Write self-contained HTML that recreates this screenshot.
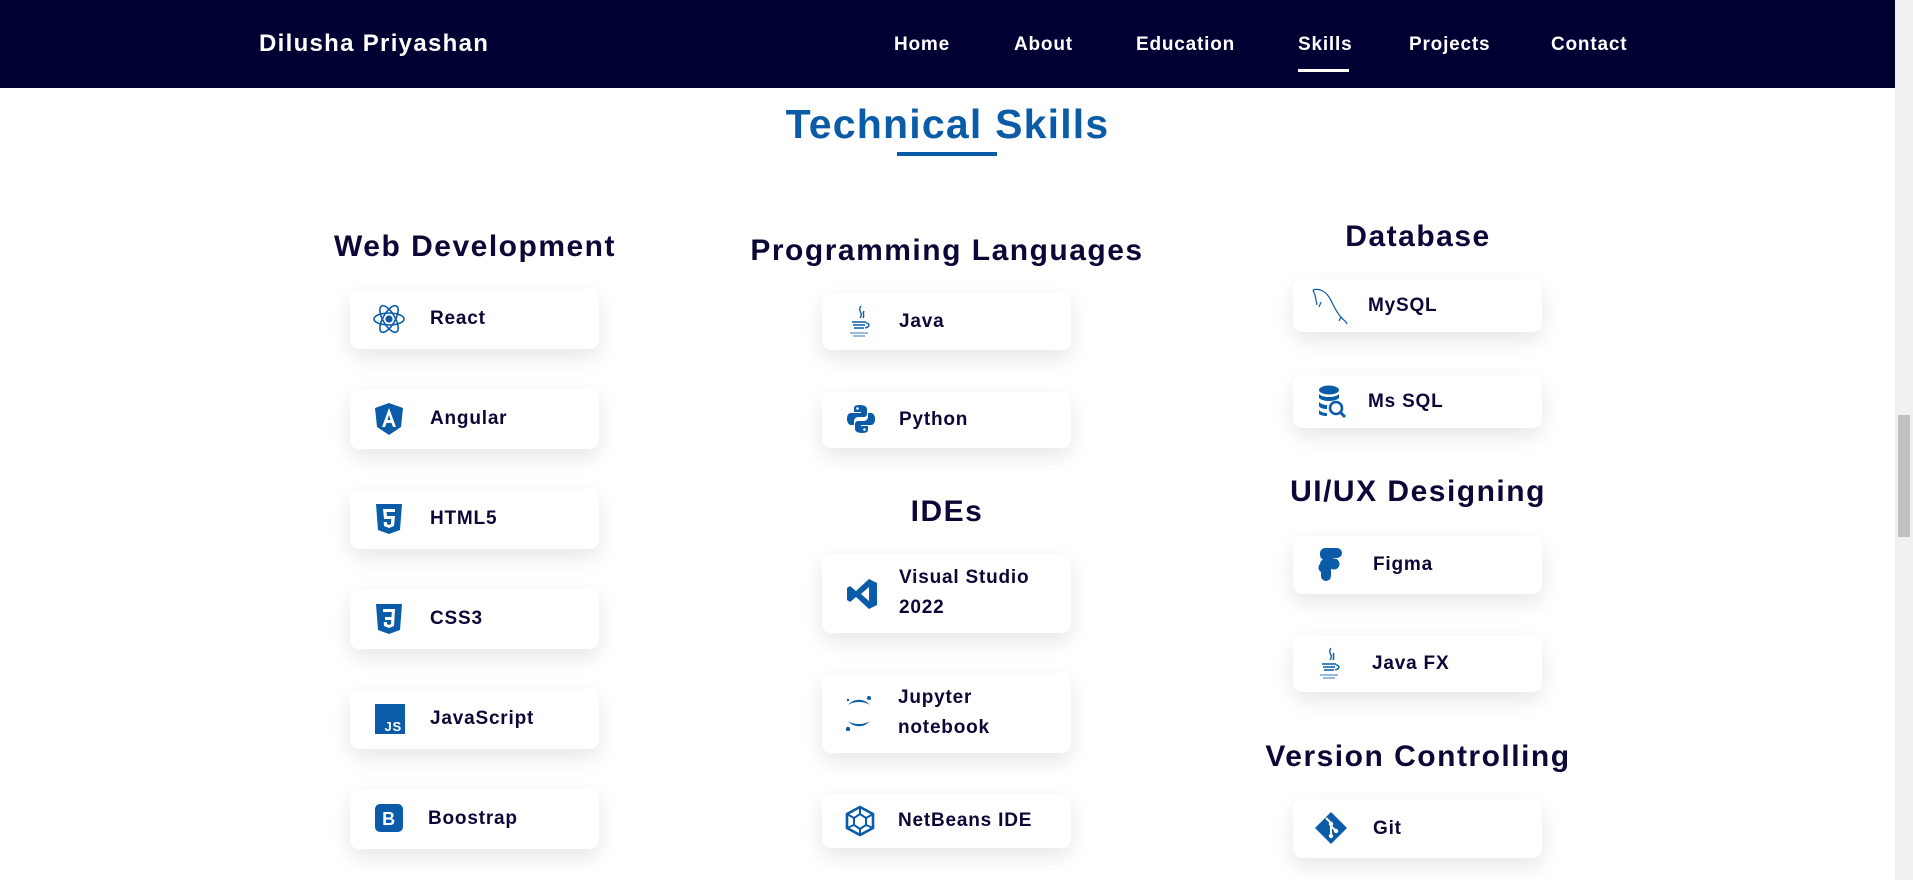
<!DOCTYPE html>
<html><head><meta charset="utf-8"><style>
*{margin:0;padding:0;box-sizing:border-box}
body{width:1913px;height:880px;overflow:hidden;background:#fff;font-family:"Liberation Sans",Arial,sans-serif;position:relative;color:#0b0736}
.nav{position:absolute;left:0;top:0;width:1895px;height:88px;background:#000033}
.brand{position:absolute;left:259px;top:30px;color:#fff;font-weight:bold;font-size:24px;letter-spacing:1.3px}
.nl{position:absolute;top:34px;color:#fff;font-weight:bold;font-size:19px;letter-spacing:0.8px}
.ul{position:absolute;left:1298px;top:69px;width:51px;height:3px;background:#fff}
.sb{position:absolute;left:1895px;top:0;width:18px;height:880px;background:#f1f1f1}
.thumb{position:absolute;left:1898px;top:415px;width:12px;height:122px;background:#c1c1c1}
.title{position:absolute;left:0;width:1895px;text-align:center;top:101px;font-size:41px;font-weight:bold;color:#0a5ca8;letter-spacing:1.2px}
.tl{position:absolute;left:897px;top:152px;width:100px;height:4px;background:#0a5ca8}
.h{position:absolute;width:500px;text-align:center;font-weight:bold;font-size:30px;color:#0b0736;letter-spacing:1.5px}
.c{position:absolute;width:249px;background:#fff;border-radius:9px;box-shadow:0 8px 22px rgba(0,0,0,0.1);display:flex;align-items:center;font-size:19px;font-weight:bold;color:#0b0736;letter-spacing:0.8px}
.c svg{position:absolute}
.c span{position:absolute;line-height:30px}
</style></head><body>
<div class="nav">
<div class="brand">Dilusha Priyashan</div>
<div class="nl" style="left:894px">Home</div>
<div class="nl" style="left:1014px">About</div>
<div class="nl" style="left:1136px">Education</div>
<div class="nl" style="left:1298px">Skills</div>
<div class="nl" style="left:1409px">Projects</div>
<div class="nl" style="left:1551px">Contact</div>
<div class="ul"></div>
</div>
<div class="sb"></div><div class="thumb"></div>
<div class="title">Technical Skills</div>
<div class="tl"></div>

<div class="h" style="left:225px;top:230px">Web Development</div>
<div class="h" style="left:697px;top:234px">Programming Languages</div>
<div class="h" style="left:1168px;top:220px">Database</div>
<div class="h" style="left:697px;top:495px">IDEs</div>
<div class="h" style="left:1168px;top:475px">UI/UX Designing</div>
<div class="h" style="left:1168px;top:740px">Version Controlling</div>

<!-- col1 -->
<div class="c" style="left:350px;top:289px;height:60px"><svg style="left:22px;top:14px" width="34" height="32" viewBox="-17 -16 34 32" fill="none" stroke="#0a5ca8" stroke-width="1.6"><ellipse rx="15" ry="6"/><ellipse rx="15" ry="6" transform="rotate(60)"/><ellipse rx="15" ry="6" transform="rotate(120)"/><circle r="2.8" fill="#0a5ca8"/></svg><span style="left:80px">React</span></div>
<div class="c" style="left:350px;top:389px;height:60px"><svg style="left:25px;top:14px" width="28" height="32" viewBox="0 0 28 32"><path d="M14 0L28 5L26 24L14 32L2 24L0 5Z" fill="#0a5ca8"/><path d="M14 5L7 24H10L11.5 20H16.5L18 24H21ZM12.5 17L14 12L15.5 17Z" fill="#fff"/></svg><span style="left:80px">Angular</span></div>
<div class="c" style="left:350px;top:489px;height:60px"><svg style="left:26px;top:15px" width="26" height="30" viewBox="0 0 26 30"><path d="M0 0H26L24 26L13 30L2 26Z" fill="#0a5ca8"/><path d="M7 5H19V8H10.5L11 12H19L18 22L13 24L8 22L7.7 18H11L11 20L13 21L15 20L15.3 15H8Z" fill="#fff"/></svg><span style="left:80px">HTML5</span></div>
<div class="c" style="left:350px;top:589px;height:60px"><svg style="left:26px;top:15px" width="26" height="30" viewBox="0 0 26 30"><path d="M0 0H26L24 26L13 30L2 26Z" fill="#0a5ca8"/><path d="M7 5H19L18 22L13 24L8 22L7.7 18H11L11 20L13 21L15 20L15.3 16H9V13H15.5L15.8 8H7Z" fill="#fff"/></svg><span style="left:80px">CSS3</span></div>
<div class="c" style="left:350px;top:689px;height:60px"><svg style="left:25px;top:15px" width="30" height="30" viewBox="0 0 30 30"><rect width="30" height="30" fill="#0a5ca8"/><text x="27" y="27" text-anchor="end" font-family="Liberation Sans" font-weight="bold" font-size="13" fill="#fff">JS</text></svg><span style="left:80px">JavaScript</span></div>
<div class="c" style="left:350px;top:789px;height:60px"><svg style="left:25px;top:15px" width="28" height="28" viewBox="0 0 28 28"><rect width="28" height="28" rx="5" fill="#0a5ca8"/><text x="14" y="21" text-anchor="middle" font-family="Liberation Sans" font-weight="bold" font-size="18" fill="#fff">B</text></svg><span style="left:78px">Boostrap</span></div>

<!-- col2 -->
<div class="c" style="left:822px;top:293px;height:57px"><svg style="left:25px;top:12px" width="26" height="34" viewBox="0 0 26 34" fill="none" stroke="#0a5ca8" stroke-width="1.4"><path d="M14 1C10 6 17 8 13 13M17 6C15 9 18 10 16 13"/><path d="M5 17H19M6 20H18M7 23H17"/><path d="M19 18C23 18 23 22 18 23"/><path d="M3 28H21M6 31H18" stroke="#7aa3d0"/></svg><span style="left:77px">Java</span></div>
<div class="c" style="left:822px;top:392px;height:56px"><svg style="left:24px;top:12px" width="30" height="30" viewBox="0 0 30 30" fill="#0a5ca8"><path d="M14 1C8 1 8 3 8 5V8H15V9H5C2 9 1 12 1 15C1 19 3 21 5 21H8V17C8 15 10 13 12 13H18C20 13 21 11 21 10V5C21 3 19 1 14 1Z"/><path d="M16 29C22 29 22 27 22 25V22H15V21H25C28 21 29 18 29 15C29 11 27 9 25 9H22V13C22 15 20 17 18 17H12C10 17 9 19 9 20V25C9 27 11 29 16 29Z"/><circle cx="11.5" cy="4.5" r="1.3" fill="#fff"/><circle cx="18.5" cy="25.5" r="1.3" fill="#fff"/></svg><span style="left:77px">Python</span></div>
<div class="c" style="left:822px;top:554px;height:79px"><svg style="left:24px;top:24px" width="32" height="32" viewBox="0 0 32 32" fill="#0a5ca8"><path d="M23 1L31 5V27L23 31L10 19L4 24L1 22V10L4 8L10 13ZM23 9L15 16L23 23Z"/></svg><span style="left:77px;top:9px">Visual Studio<br>2022</span></div>
<div class="c" style="left:822px;top:673px;height:80px"><svg style="left:22px;top:22px" width="30" height="38" viewBox="0 0 30 38" fill="#0a5ca8"><path d="M4 10C10 3 20 3 26 10C20 6 10 6 4 10Z"/><path d="M4 26C10 33 20 33 26 26C20 30 10 30 4 26Z"/><circle cx="25" cy="3" r="2"/><circle cx="4" cy="5" r="1.2"/><circle cx="4" cy="34" r="2.2"/></svg><span style="left:76px;top:10px">Jupyter<br>notebook</span></div>
<div class="c" style="left:822px;top:794px;height:54px"><svg style="left:22px;top:11px" width="32" height="32" viewBox="0 0 32 32" fill="none" stroke="#0a5ca8" stroke-width="2.6"><path d="M16 2L29 9V23L16 30L3 23V9Z"/><path d="M16 9L22 13V20L16 24L10 20V13Z" stroke-width="2"/><path d="M16 2V9M29 9L22 13M29 23L22 20M16 30V24M3 23L10 20M3 9L10 13" stroke-width="2"/></svg><span style="left:76px">NetBeans IDE</span></div>

<!-- col3 -->
<div class="c" style="left:1293px;top:279px;height:53px"><svg style="left:18px;top:8px" width="40" height="38" viewBox="0 0 40 38" fill="none" stroke="#0a5ca8" stroke-width="1.2"><path d="M2 3C8 1 14 4 18 10C22 16 24 24 30 30C32 33 35 34 36 37M2 3L4 8L6 18M10 15L8 20M30 30L28 34"/></svg><span style="left:75px">MySQL</span></div>
<div class="c" style="left:1293px;top:375px;height:53px"><svg style="left:25px;top:10px" width="30" height="34" viewBox="0 0 30 34" fill="#0a5ca8"><ellipse cx="11" cy="5" rx="10" ry="4.5"/><path d="M1 9C5 13 17 13 21 9V13C17 17 5 17 1 13ZM1 17C3 19 6 20 9 20V24C5 24 2 23 1 21ZM1 25C3 27 6 28 9 28V31C5 31 2 30 1 29Z"/><circle cx="18" cy="23" r="6" fill="none" stroke="#0a5ca8" stroke-width="2.6"/><path d="M22 27L27 32" stroke="#0a5ca8" stroke-width="3"/></svg><span style="left:75px">Ms SQL</span></div>
<div class="c" style="left:1293px;top:536px;height:58px"><svg style="left:25px;top:11px" width="24" height="36" viewBox="0 0 24 36" fill="#0a5ca8"><path d="M2 6A5 5 0 0 1 7 1H19A5 5 0 0 1 19 11H15A5 5 0 0 1 15 11V13H7A5 5 0 0 1 2 8Z"/><circle cx="16" cy="17" r="5.5"/><path d="M7 12H13V29A5 5 0 0 1 3 29V25A5 5 0 0 1 2 17A5 5 0 0 1 7 12Z"/></svg><span style="left:80px">Figma</span></div>
<div class="c" style="left:1293px;top:636px;height:56px"><svg style="left:24px;top:11px" width="26" height="34" viewBox="0 0 26 34" fill="none" stroke="#0a5ca8" stroke-width="1.4"><path d="M14 1C10 6 17 8 13 13M17 6C15 9 18 10 16 13"/><path d="M5 17H19M6 20H18M7 23H17"/><path d="M19 18C23 18 23 22 18 23"/><path d="M3 28H21M6 31H18" stroke="#7aa3d0"/></svg><span style="left:79px">Java FX</span></div>
<div class="c" style="left:1293px;top:799px;height:59px"><svg style="left:21px;top:12px" width="34" height="34" viewBox="0 0 34 34"><path d="M17 1L33 17L17 33L1 17Z" fill="#0a5ca8"/><path d="M12 7L17 12V25M17 15L22 20" stroke="#fff" stroke-width="2" fill="none"/><circle cx="17" cy="13" r="2.2" fill="#fff"/><circle cx="17" cy="25" r="2.2" fill="#fff"/><circle cx="22" cy="20" r="2.2" fill="#fff"/></svg><span style="left:80px">Git</span></div>
</body></html>
